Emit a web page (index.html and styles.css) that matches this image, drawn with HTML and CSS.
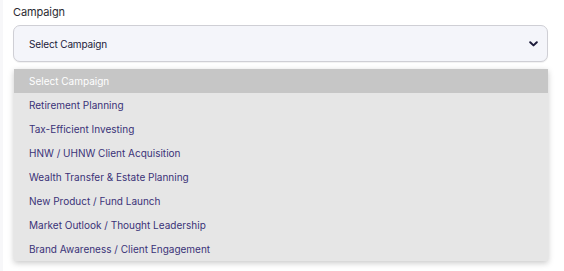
FILE: index.html
```html
<!DOCTYPE html>
<html>
<head>
<meta charset="utf-8">
<link rel="stylesheet" href="styles.css">
</head>
<body>
<div class="page">
  <div class="field">
    <div class="label">Campaign</div>
    <div class="select">
      <span class="select-text">Select Campaign</span>
      <svg class="chev" width="9" height="6" viewBox="0 0 9 6"><path d="M1.2 1.2 L4.5 4.4 L7.8 1.2" fill="none" stroke="#1c1b3a" stroke-width="2" stroke-linecap="round" stroke-linejoin="round"/></svg>
    </div>
    <ul class="menu">
      <li class="opt active">Select Campaign</li>
      <li class="opt">Retirement Planning</li>
      <li class="opt">Tax-Efficient Investing</li>
      <li class="opt">HNW / UHNW Client Acquisition</li>
      <li class="opt">Wealth Transfer &amp; Estate Planning</li>
      <li class="opt">New Product / Fund Launch</li>
      <li class="opt">Market Outlook / Thought Leadership</li>
      <li class="opt">Brand Awareness / Client Engagement</li>
    </ul>
  </div>
</div>
</body>
</html>
```
FILE: styles.css
```css
html, body {
  margin: 0;
  padding: 0;
  background: #ffffff;
}
body {
  font-family: Inter, "Liberation Sans", sans-serif;
  width: 564px;
  height: 271px;
  overflow: hidden;
}
.page {
  border-left: 3px solid #f7f7f9;
  height: 271px;
  box-sizing: border-box;
  padding: 4px 16px 0 10px;
}
.label {
  font-size: 11px;
  line-height: 16px;
  letter-spacing: -0.1px;
  color: #2b2b33;
  margin-bottom: 5px;
}
.select {
  height: 37px;
  box-sizing: border-box;
  border: 1.5px solid #cfcfd5;
  border-radius: 7px;
  background: #f4f5fa;
  display: flex;
  align-items: center;
  justify-content: space-between;
  padding: 0 9px 0 15px;
  box-shadow: 0 1px 1px rgba(0,0,0,0.06);
}
.select-text {
  font-size: 10px;
  letter-spacing: -0.15px;
  color: #22223a;
}
.chev {
  display: block;
}
.menu {
  list-style: none;
  margin: 7px 0 0 1px;
  padding: 0;
  width: 534px;
  background: #e6e6e6;
  box-shadow: 0 2px 6px rgba(0,0,0,0.22);
}
.opt {
  height: 24px;
  line-height: 24px;
  padding-left: 15px;
  font-size: 10px;
  color: #3a3278;
}
.opt.active {
  background: #c6c6c6;
  color: #ffffff;
}
```
